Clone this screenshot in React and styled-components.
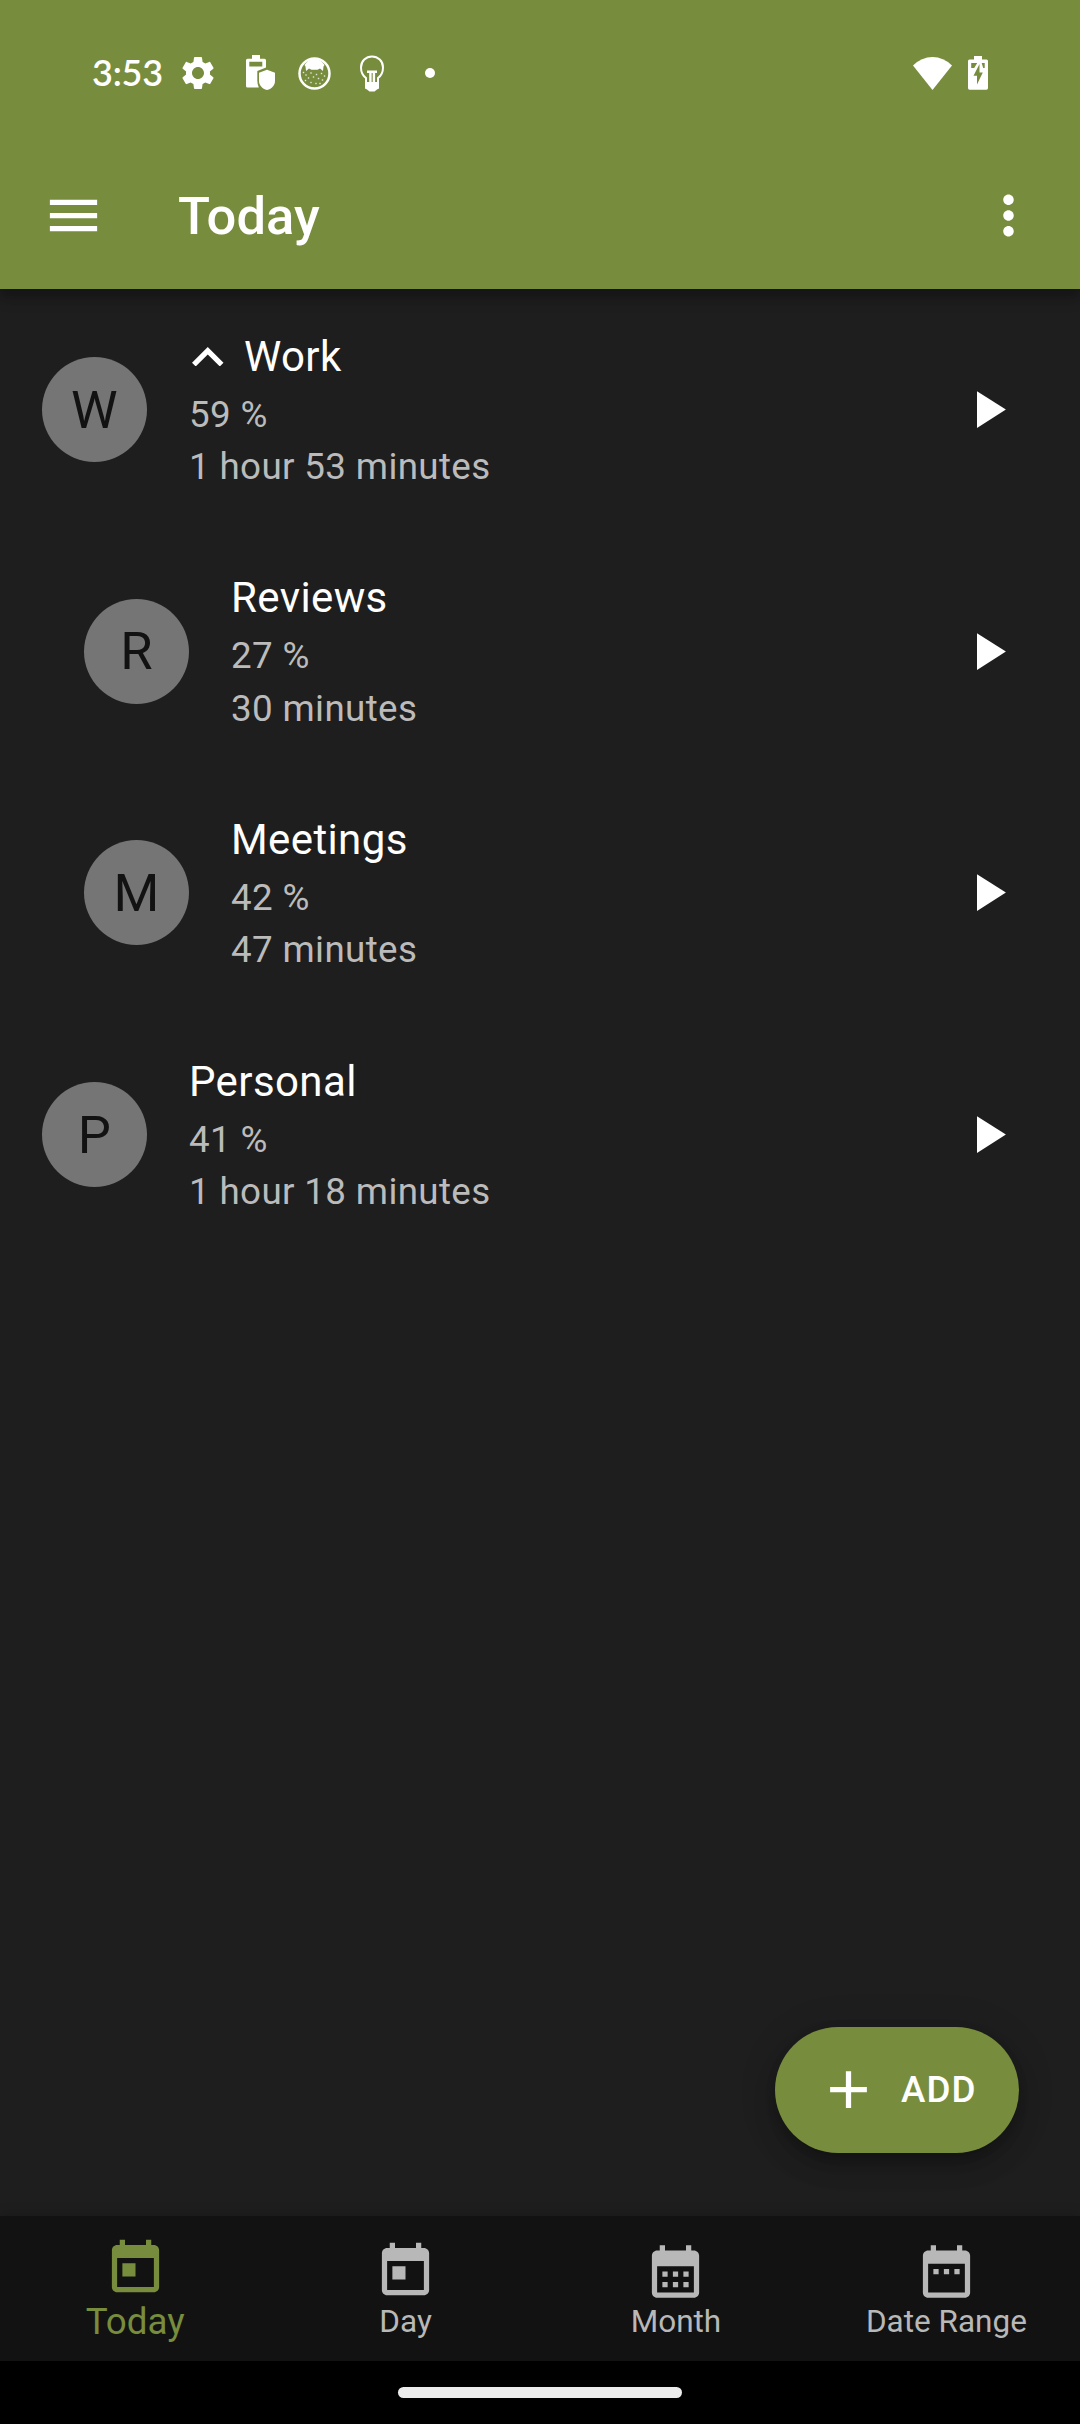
import React from "react";
import styled, { createGlobalStyle } from "styled-components";

const OLIVE = "#778d3d";

const GlobalStyle = createGlobalStyle`
  * { box-sizing: border-box; }
  html, body { margin: 0; padding: 0; background: #1e1e1e; }
  body { font-family: Roboto, "Liberation Sans", sans-serif; }
  button { font: inherit; color: inherit; background: none; border: 0; padding: 0; }
  svg { display: block; flex: none; }
`;

const Screen = styled.div`
  display: flex;
  flex-direction: column;
  width: 1080px;
  height: 2424px;
  background: #1e1e1e;
  color: #fff;
  overflow: hidden;
`;

const Header = styled.header`
  flex: none;
  height: 289px;
  background: ${OLIVE};
  box-shadow: 0 5px 11px rgba(0, 0, 0, 0.22), 0 10px 14px rgba(0, 0, 0, 0.16);
`;

const StatusBar = styled.div`
  display: flex;
  align-items: center;
  height: 142px;
  padding: 4px 92px 0 92px;
`;

const Clock = styled.span`
  width: 89px;
  padding-bottom: 2px;
  font-family: Lato, Roboto, sans-serif;
  font-weight: 600;
  font-size: 36px;
  line-height: 44px;
  letter-spacing: -0.2px;
`;

const Notices = styled.div`
  display: flex;
  align-items: center;
  flex: 1;
`;

const NoticeSlot = styled.span`
  display: flex;
  justify-content: center;
  width: ${(p) => p.$w}px;
`;

const SystemIcons = styled.div`
  display: flex;
  align-items: center;
  gap: 16px;
`;

const AppBar = styled.div`
  display: flex;
  align-items: center;
  height: 147px;
  padding: 0 40px 0 42px;
`;

const Title = styled.h1`
  flex: 1;
  margin: 0 0 0 73px;
  font-size: 52.5px;
  font-weight: 500;
  line-height: 62px;
  letter-spacing: 0.1px;
`;

const Content = styled.main`
  display: flex;
  flex-direction: column;
  flex: 1;
  min-height: 0;
`;

const Row = styled.div`
  display: flex;
  align-items: center;
  flex: none;
  height: 241.6px;
  padding: 0 61px 0 ${(p) => (p.$nested ? 84 : 42)}px;
`;

const Avatar = styled.div`
  display: flex;
  align-items: center;
  justify-content: center;
  flex: none;
  width: 105px;
  height: 105px;
  border-radius: 50%;
  background: #757575;
  color: #121212;
  font-size: 52.5px;
  letter-spacing: 0.39px;
`;

const Details = styled.div`
  flex: 1;
  margin-left: 42px;
`;

const Name = styled.div`
  display: flex;
  align-items: center;
  height: 63px;
  padding-bottom: 2px;
  font-size: 42px;
  line-height: 61px;
  letter-spacing: 0.39px;
`;

const Caret = styled.svg`
  margin: 0 20.5px 0 3px;
`;

const Meta = styled.div`
  font-size: 36.75px;
  line-height: 52.5px;
  letter-spacing: 0.36px;
  color: #bbbbbb;
`;

const AddButton = styled.button`
  display: flex;
  align-items: center;
  align-self: flex-end;
  width: 244px;
  height: 126px;
  margin: auto 61px 63px 0;
  padding: 0 0 1px 42px;
  border-radius: 63px;
  background: ${OLIVE};
  box-shadow: 0 9px 14px -3px rgba(0, 0, 0, 0.2), 0 14px 24px rgba(0, 0, 0, 0.14),
    0 3px 40px rgba(0, 0, 0, 0.12);
`;

const AddLabel = styled.span`
  margin-left: 21px;
  padding-bottom: 1px;
  font-size: 36.75px;
  font-weight: 500;
  letter-spacing: 1.1px;
`;

const BottomNav = styled.nav`
  display: grid;
  grid-template-columns: repeat(4, 270.4px);
  flex: none;
  height: 145px;
  background: #121212;
  box-shadow: 0 -2px 12px rgba(0, 0, 0, 0.16);
`;

const Tab = styled.button`
  display: flex;
  flex-direction: column;
  align-items: center;
  padding-top: ${(p) => (p.$active ? 20.7 : 23.7)}px;
  color: ${(p) => (p.$active ? OLIVE : "#b8b8b8")};
  font-size: ${(p) => (p.$active ? 36.75 : 31.5)}px;
  line-height: ${(p) => (p.$active ? 43 : 37.6)}px;
  letter-spacing: 0;
`;

const GestureBar = styled.div`
  display: flex;
  justify-content: center;
  flex: none;
  height: 63px;
  padding-top: 26px;
  background: #000;
`;

const Handle = styled.div`
  width: 284px;
  height: 11px;
  border-radius: 5.5px;
  background: #ececec;
`;

const Icon = ({ d, size = 63 }) => (
  <svg width={size} height={size} viewBox="0 0 24 24" fill="currentColor">
    <path d={d} />
  </svg>
);

const MENU = "M3 18h18v-2H3v2zm0-5h18v-2H3v2zm0-7v2h18V6H3z";
const MORE =
  "M12 8c1.1 0 2-.9 2-2s-.9-2-2-2-2 .9-2 2 .9 2 2 2zm0 2c-1.1 0-2 .9-2 2s.9 2 2 2 2-.9 2-2-.9-2-2-2zm0 6c-1.1 0-2 .9-2 2s.9 2 2 2 2-.9 2-2-.9-2-2-2z";
const PLAY = "M8 5v14l11-7z";
const PLUS = "M19 13h-6v6h-2v-6H5v-2h6V5h2v6h6v2z";
const GEAR =
  "M19.14 12.94c.04-.3.06-.61.06-.94 0-.32-.02-.64-.07-.94l2.03-1.58c.18-.14.23-.41.12-.61l-1.92-3.32c-.12-.22-.37-.29-.59-.22l-2.39.96c-.5-.38-1.03-.7-1.62-.94l-.36-2.54c-.04-.24-.24-.41-.48-.41h-3.84c-.24 0-.43.17-.47.41l-.36 2.54c-.59.24-1.13.57-1.62.94l-2.39-.96c-.22-.08-.47 0-.59.22L2.74 8.87c-.12.21-.08.47.12.61l2.03 1.58c-.05.3-.09.63-.09.94s.02.64.07.94l-2.03 1.58c-.18.14-.23.41-.12.61l1.92 3.32c.12.22.37.29.59.22l2.39-.96c.5.38 1.03.7 1.62.94l.36 2.54c.05.24.24.41.48.41h3.84c.24 0 .44-.17.47-.41l.36-2.54c.59-.24 1.13-.56 1.62-.94l2.39.96c.22.08.47 0 .59-.22l1.92-3.32c.12-.22.07-.47-.12-.61l-2.01-1.58zM12 15.6c-1.98 0-3.6-1.62-3.6-3.6s1.62-3.6 3.6-3.6 3.6 1.62 3.6 3.6-1.62 3.6-3.6 3.6z";
const CAL_TODAY =
  "M19 3h-1V1h-2v2H8V1H6v2H5c-1.11 0-1.99.9-1.99 2L3 19c0 1.1.89 2 2 2h14c1.1 0 2-.9 2-2V5c0-1.1-.9-2-2-2zm0 16H5V8h14v11zM7 10h5v5H7z";
const CAL_MONTH =
  "M19 4h-1V2h-2v2H8V2H6v2H5c-1.11 0-1.99.9-1.99 2L3 20c0 1.1.89 2 2 2h14c1.1 0 2-.9 2-2V6c0-1.1-.9-2-2-2zm0 16H5V10h14v10zM7 12h2v2H7zM11 12h2v2h-2zM15 12h2v2h-2zM7 16h2v2H7zM11 16h2v2h-2zM15 16h2v2h-2z";
const CAL_RANGE =
  "M9 11H7v2h2v-2zm4 0h-2v2h2v-2zm4 0h-2v2h2v-2zm2-7h-1V2h-2v2H8V2H6v2H5c-1.11 0-1.99.9-1.99 2L3 20c0 1.1.89 2 2 2h14c1.1 0 2-.9 2-2V6c0-1.1-.9-2-2-2zm0 16H5V9h14v11z";

const BatteryShield = () => (
  <svg width="30" height="36" viewBox="0 0 30 36" fill="#fff">
    <path
      fillRule="evenodd"
      d="M6 0h8v3.700h4.500q1.500 0 1.500 1.500V12.500L11.300 16v9.500Q11.300 29 12.800 32.500H1.500Q0 32.500 0 31V5.200q0-1.500 1.500-1.500H6zM3.300 6.700v4.700h13V6.700z"
    />
    <path d="M21 14.800l8 3v8c0 4.500-3 8-8 9.300c-5-1.300-8-4.800-8-9.300v-8z" />
  </svg>
);

const CatBadge = () => (
  <svg width="33" height="33" viewBox="0 0 33 33">
    <circle cx="16.5" cy="16.5" r="15" fill="none" stroke="#fff" strokeWidth="2.5" />
    <path
      fill="#fff"
      d="M6.500 8C9 4 12 2 16.500 2S24 4 26.500 8L25.500 9.500L25 14L22 11.500L19.500 12.700H13.500L11 11.500L8 14L7.500 9.500Z"
    />
    <g fill="#fff">
      {[
        [5.5, 15.5], [8, 18], [13, 16], [18.5, 17.5], [23.5, 16.5], [26.5, 19], [10.5, 21],
        [15.5, 20], [20.5, 21.5], [24.5, 23], [13, 25.5], [18, 26.5], [7.5, 23.5], [22, 26.5],
      ].map(([x, y]) => (
        <rect key={`${x}-${y}`} x={x - 0.7} y={y - 0.7} width="1.4" height="1.4" opacity="0.8" />
      ))}
    </g>
  </svg>
);

const Bulb = () => (
  <svg width="26" height="37" viewBox="0 0 26 37" fill="none" stroke="#fff" strokeWidth="2">
    <path d="M7 28v-5C3.500 20.500 2 17 2 12.500C2 6 7 1.500 13 1.500s11 4.500 11 11c0 4.500-1.500 8-5 10.500V28" />
    <path strokeWidth="2.4" d="M8 16.800h10M11.400 16.500v11M14.900 16.500v11" />
    <path fill="#fff" stroke="none" d="M6 27h14v6.500l-2 1l-2.500 2h-5l-2.500-2l-2-1z" />
  </svg>
);

const Wifi = () => (
  <svg width="39" height="33" viewBox="0 0 39 33">
    <path fill="#fff" d="M0 8.500Q8.500 0 19.500 0T39 8.500L19.500 33Z" />
  </svg>
);

const Battery = () => (
  <svg width="20" height="34" viewBox="0 0 20 34">
    <path
      fill="#fff"
      d="M6 0h8v3.500h4.500q1.500 0 1.500 1.500v27q0 1.700-1.500 1.700h-17Q0 33.700 0 32V5q0-1.500 1.500-1.500H6z"
    />
    <path
      fill={OLIVE}
      d="M3.200 7h6l-3 5h-3zM13.700 7h3v5h-1.500zM11.500 8v8.500h3.300L9 28.500v-8.700H5.500z"
    />
  </svg>
);

const tasks = [
  { name: "Work", share: "59 %", time: "1 hour 53 minutes", expanded: true },
  { name: "Reviews", share: "27 %", time: "30 minutes", nested: true },
  { name: "Meetings", share: "42 %", time: "47 minutes", nested: true },
  { name: "Personal", share: "41 %", time: "1 hour 18 minutes" },
];

const tabs = [
  { label: "Today", icon: CAL_TODAY, active: true },
  { label: "Day", icon: CAL_TODAY },
  { label: "Month", icon: CAL_MONTH },
  { label: "Date Range", icon: CAL_RANGE },
];

function TaskRow({ name, share, time, nested, expanded }) {
  return (
    <Row $nested={nested}>
      <Avatar>{name[0]}</Avatar>
      <Details>
        <Name>
          {expanded && (
            <Caret width="31.5" height="19.45" viewBox="6 8 12 7.41" fill="#fff">
              <path d="M12 8l-6 6 1.410 1.410L12 10.830l4.590 4.580L18 14z" />
            </Caret>
          )}
          {name}
        </Name>
        <Meta>{share}</Meta>
        <Meta>{time}</Meta>
      </Details>
      <Icon d={PLAY} />
    </Row>
  );
}

export default function App() {
  return (
    <Screen>
      <GlobalStyle />
      <Header>
        <StatusBar>
          <Clock>3:53</Clock>
          <Notices>
            <NoticeSlot $w={34}>
              <Icon d={GEAR} size={40} />
            </NoticeSlot>
            <NoticeSlot $w={91}>
              <BatteryShield />
            </NoticeSlot>
            <NoticeSlot $w={16}>
              <CatBadge />
            </NoticeSlot>
            <NoticeSlot $w={100}>
              <Bulb />
            </NoticeSlot>
            <NoticeSlot $w={16}>
              <svg width="10" height="10">
                <circle cx="5" cy="5" r="5" fill="#fff" />
              </svg>
            </NoticeSlot>
          </Notices>
          <SystemIcons>
            <Wifi />
            <Battery />
          </SystemIcons>
        </StatusBar>
        <AppBar>
          <Icon d={MENU} />
          <Title>Today</Title>
          <Icon d={MORE} />
        </AppBar>
      </Header>
      <Content>
        {tasks.map((task) => (
          <TaskRow key={task.name} {...task} />
        ))}
        <AddButton>
          <Icon d={PLUS} />
          <AddLabel>ADD</AddLabel>
        </AddButton>
      </Content>
      <BottomNav>
        {tabs.map(({ label, icon, active }) => (
          <Tab key={label} $active={active}>
            <Icon d={icon} />
            {label}
          </Tab>
        ))}
      </BottomNav>
      <GestureBar>
        <Handle />
      </GestureBar>
    </Screen>
  );
}
